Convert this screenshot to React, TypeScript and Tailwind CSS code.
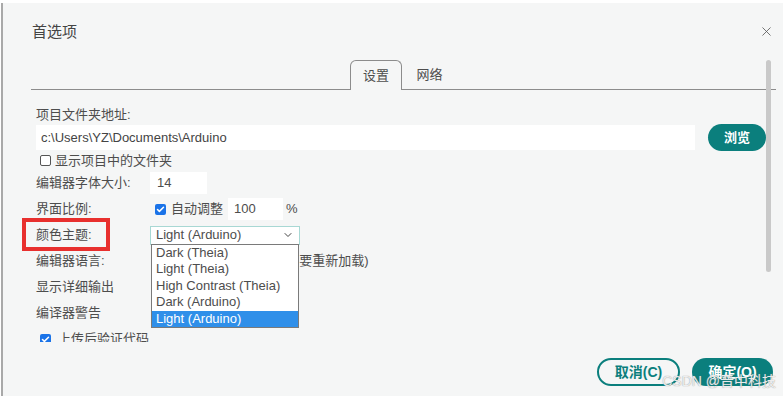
import React from 'react';
import { X, ChevronDown, Check } from 'lucide-react';

const themes = ['Dark (Theia)', 'Light (Theia)', 'High Contrast (Theia)', 'Dark (Arduino)', 'Light (Arduino)'];

function Box({ checked }: { checked?: boolean }) {
    if (checked) {
        return (
            <span className="w-[11px] h-[11px] rounded-[2px] bg-[#1a73e8] flex items-center justify-center shrink-0">
                <Check size={9} strokeWidth={4} className="text-white" />
            </span>
        );
    }
    return <span className="w-[11px] h-[11px] rounded-[2px] border border-[#555] bg-white shrink-0" />;
}

function Row({ label, children }: { label: string; children?: React.ReactNode }) {
    return (
        <div className="relative flex items-center h-[26px]">
            <span className="w-[114px] shrink-0">{label}</span>
            {children}
        </div>
    );
}

export default function App() {
    return (
        <div className="w-[783px] h-[396px] bg-white pt-[3px] pl-[1px] overflow-hidden">
            <div className="relative h-full bg-[#f5f6f6] border-l-2 border-[#a9a9a9] flex flex-col text-[13px] leading-[18px] text-[#4d4d4d] font-['Liberation_Sans','Noto_Sans_CJK_SC',sans-serif]">
                {/* Header */}
                <div className="h-[57px] shrink-0 flex items-center justify-between pl-[29px] pr-[9px]">
                    <span className="text-[15px] text-[#444]">首选项</span>
                    <X size={15} strokeWidth={1.3} className="text-[#555]" />
                </div>

                {/* Tabs */}
                <div className="h-[30px] shrink-0 ml-[28px] mr-[7px] flex justify-center items-end border-b border-[#8c8c8c]">
                    <div className="w-[52px] h-[30px] -mb-px border border-b-0 border-[#8c8c8c] rounded-t-[6px] bg-[#f5f6f6] flex items-center justify-center">设置</div>
                    <div className="w-[55px] h-[29px] flex items-center justify-center">网络</div>
                </div>

                {/* Settings */}
                <div className="h-[252px] shrink-0 overflow-hidden pl-[33px] pt-[16px]">
                    <div className="h-[18px]">项目文件夹地址:</div>
                    <div className="flex items-center h-[27px] gap-[13px]">
                        <div className="w-[659px] h-[25px] bg-white px-[5px] flex items-center text-[#444]">c:\Users\YZ\Documents\Arduino</div>
                        <button className="w-[58px] h-[27px] rounded-full bg-[#0b7f7d] text-white font-bold text-[13px]">浏览</button>
                    </div>
                    <div className="flex items-center h-[19px] pl-[4px] gap-[4px]">
                        <Box />
                        <span>显示项目中的文件夹</span>
                    </div>
                    <Row label="编辑器字体大小:">
                        <div className="w-[57px] h-[22px] bg-white px-[7px] flex items-center">14</div>
                    </Row>
                    <Row label="界面比例:">
                        <div className="ml-[5px] flex items-center gap-[5px]">
                            <Box checked />
                            <span>自动调整</span>
                        </div>
                        <div className="ml-[5px] w-[55px] h-[22px] bg-white px-[6px] flex items-center">100</div>
                        <span className="ml-[3px]">%</span>
                    </Row>
                    <Row label="颜色主题:">
                        <div className="absolute -left-[14px] -top-[4px] w-[88px] h-[33px] border-[4px] border-[#e8302e]" />
                        <div className="relative w-[150px] h-[19px] border border-[#a8d8d4] bg-white px-[5px] flex items-center justify-between">
                            <span>Light (Arduino)</span>
                            <ChevronDown size={12} strokeWidth={2} className="text-[#444]" />
                            <div className="absolute z-10 top-[17px] left-0 w-[148px] border border-[#7a7a7a] bg-white">
                                {themes.map((t, i) => (
                                    <div
                                        key={t}
                                        className={
                                            i === themes.length - 1
                                                ? 'h-[16.6px] leading-[16.6px] pl-[4px] bg-[#2f8fe9] text-white'
                                                : 'h-[16.6px] leading-[16.6px] pl-[4px]'
                                        }
                                    >
                                        {t}
                                    </div>
                                ))}
                            </div>
                        </div>
                    </Row>
                    <Row label="编辑器语言:">
                        <span className="ml-[132px]">(需要重新加载)</span>
                    </Row>
                    <Row label="显示详细输出" />
                    <Row label="编译器警告" />
                    <div className="flex items-center h-[26px] pl-[4px] gap-[7px]">
                        <Box checked />
                        <span>上传后验证代码</span>
                    </div>
                </div>

                {/* Footer */}
                <div className="flex justify-end gap-[12px] pr-[10px] pt-[16px]">
                    <button className="w-[83px] h-[28px] rounded-full border-2 border-[#0b7f7d] text-[#0b7f7d] font-bold text-[14px]">取消(C)</button>
                    <button className="w-[81px] h-[28px] rounded-full bg-[#0b7f7d] text-white font-bold text-[14px]">确定(O)</button>
                </div>

                {/* Scrollbar */}
                <div className="absolute left-[763px] top-[57px] w-[5px] h-[212px] rounded-full bg-[#c9c9c9]" />

                {/* Watermark */}
                <div className="absolute right-[7px] bottom-[6px] text-[14px] text-white/85 [text-shadow:0_0_1px_#777]">CSDN @晋中科技</div>
            </div>
        </div>
    );
}
